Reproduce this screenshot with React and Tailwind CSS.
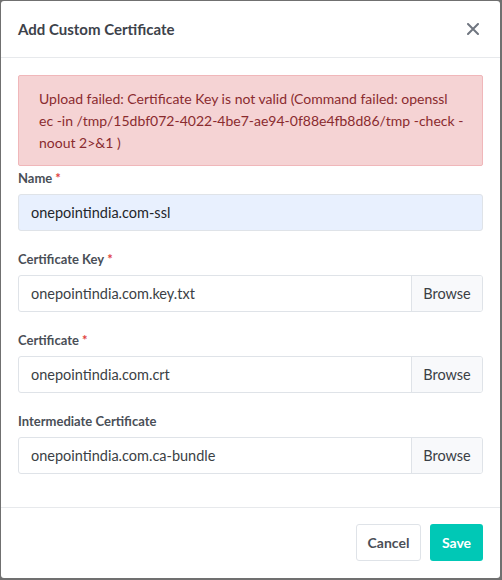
import React from 'react';

const fields = [
  { label: 'Certificate Key', required: true, value: 'onepointindia.com.key.txt' },
  { label: 'Certificate', required: true, value: 'onepointindia.com.crt' },
  { label: 'Intermediate Certificate', required: false, value: 'onepointindia.com.ca-bundle' },
];

const Label = ({ children, required }) => (
  <div className="h-[18px] flex items-center text-[13px] font-bold text-[#4a4f57] leading-none">
    {children}
    {required && <span className="ml-[3px] text-[#e0403c]">*</span>}
  </div>
);

const FileField = ({ label, required, value }) => (
  <div className="mt-[19px]">
    <Label required={required}>{label}</Label>
    <div className="mt-[7px] h-[37px] flex border border-[#dfe3e8] rounded-[3px] overflow-hidden">
      <div className="flex-1 flex items-center px-[12px] text-[14.5px] text-[#3b3f45]">{value}</div>
      <div className="w-[71px] flex items-center justify-center border-l border-[#dfe3e8] bg-[#f8f9fb] text-[14.5px] text-[#3b3f45]">
        Browse
      </div>
    </div>
  </div>
);

export default function App() {
  return (
    <div
      className="w-[502px] h-[580px] bg-[#707070] pl-[1px] pt-[1px]"
      style={{ fontFamily: 'Lato, "Noto Sans", sans-serif' }}
    >
      <div className="w-[499px] h-[577px] bg-white rounded-[3px] flex flex-col">
        {/* Header */}
        <div className="h-[57px] flex items-center justify-between pl-[17px] pr-[21px] border-b border-[#e7e9ec]">
          <h2 className="text-[15px] font-bold text-[#3d424a]">Add Custom Certificate</h2>
          <svg width="12" height="12" viewBox="0 0 12 12" className="text-[#707680]">
            <path d="M1 1L11 11M11 1L1 11" stroke="currentColor" strokeWidth="2" strokeLinecap="round" />
          </svg>
        </div>

        {/* Body */}
        <div className="flex-1 px-[17px] pt-[17px]">
          <div className="h-[91px] bg-[#f5d3d4] border border-[#f0b7ba] rounded-[2px] px-[20px] pt-[12px] text-[14px] leading-[22px] text-[#8a2b2f] whitespace-nowrap">
            Upload failed: Certificate Key is not valid (Command failed: openssl
            <br />
            ec -in /tmp/15dbf072-4022-4be7-ae94-0f88e4fb8d86/tmp -check -
            <br />
            noout 2&gt;&amp;1 )
          </div>

          <div className="mt-[3px]">
            <Label required>Name</Label>
            <div className="mt-[7px] h-[37px] flex items-center px-[12px] bg-[#e8f0fe] border border-[#dfe3e8] rounded-[3px] text-[14.5px] text-[#23262b]">
              onepointindia.com-ssl
            </div>
          </div>

          {fields.map((f) => (
            <FileField key={f.label} {...f} />
          ))}
        </div>

        {/* Footer */}
        <div className="h-[71px] border-t border-[#e7e9ec] flex items-start justify-end gap-[9px] pt-[16px] pr-[17px]">
          <button className="h-[37px] w-[65px] border border-[#dfe3e8] rounded-[3px] bg-white text-[14px] font-bold text-[#4a4f57]">
            Cancel
          </button>
          <button className="h-[37px] w-[53px] rounded-[3px] bg-[#00c8b6] text-[14px] font-bold text-white">
            Save
          </button>
        </div>
      </div>
    </div>
  );
}
